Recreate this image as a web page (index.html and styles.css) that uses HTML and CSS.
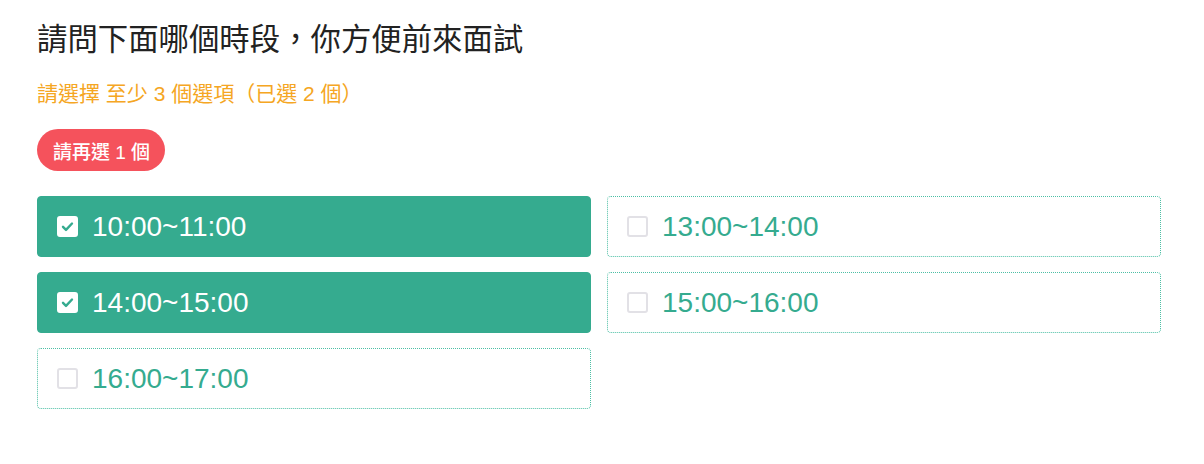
FILE: index.html
```html
<!DOCTYPE html>
<html lang="zh-Hant">
<head>
<meta charset="utf-8">
<title>面試時段</title>
<link rel="stylesheet" href="styles.css">
</head>
<body>
<div class="wrap">
  <h1 class="title">請問下面哪個時段，你方便前來面試</h1>
  <p class="hint">請選擇 至少 3 個選項（已選 2 個）</p>
  <div class="badge-row"><span class="badge">請再選 1 個</span></div>
  <div class="options">
    <label class="opt checked"><span class="box"><svg viewBox="0 0 20 20" width="15" height="15"><path d="M4 10.5l4 4 8-8.5" fill="none" stroke="#35ab8f" stroke-width="3.2" stroke-linecap="round" stroke-linejoin="round"/></svg></span><span class="txt">10:00~11:00</span></label>
    <label class="opt"><span class="box"></span><span class="txt">13:00~14:00</span></label>
    <label class="opt checked"><span class="box"><svg viewBox="0 0 20 20" width="15" height="15"><path d="M4 10.5l4 4 8-8.5" fill="none" stroke="#35ab8f" stroke-width="3.2" stroke-linecap="round" stroke-linejoin="round"/></svg></span><span class="txt">14:00~15:00</span></label>
    <label class="opt"><span class="box"></span><span class="txt">15:00~16:00</span></label>
    <label class="opt"><span class="box"></span><span class="txt">16:00~17:00</span></label>
  </div>
</div>
</body>
</html>
```
FILE: styles.css
```css
html, body {
  margin: 0;
  padding: 0;
  background: #ffffff;
}
body {
  font-family: "Liberation Sans", "Noto Sans CJK TC", sans-serif;
}
.wrap {
  width: 1124px;
  padding: 17px 0 0 37px;
}
.title {
  margin: 0;
  font-family: "Noto Sans CJK TC", sans-serif;
  font-weight: 400;
  font-size: 30.4px;
  line-height: 40px;
  color: #222222;
}
.hint {
  margin: 24px 0 0;
  font-family: "Liberation Sans", "Noto Sans CJK TC", sans-serif;
  font-size: 21px;
  line-height: 26px;
  color: #f5a623;
}
.badge-row {
  margin-top: 22px;
  display: flex;
}
.badge {
  display: inline-flex;
  align-items: center;
  height: 42px;
  padding: 0 15px 0 16px;
  border-radius: 21px;
  background: #f5525c;
  color: #ffffff;
  font-family: "Liberation Sans", "Noto Sans CJK TC", sans-serif;
  font-weight: 500;
  font-size: 19px;
}
.options {
  margin-top: 25px;
  display: grid;
  grid-template-columns: 1fr 1fr;
  column-gap: 16px;
  row-gap: 15px;
}
.opt {
  height: 61px;
  box-sizing: border-box;
  display: flex;
  align-items: center;
  padding-left: 19px;
  border: 1px dotted #4dbfa5;
  border-radius: 4px;
  background: #ffffff;
  color: #35ab8f;
}
.opt.checked {
  background: #35ab8f;
  border: 1px solid #35ab8f;
  color: #ffffff;
}
.box {
  width: 21px;
  height: 21px;
  box-sizing: border-box;
  border: 2px solid #e2e1e6;
  border-radius: 3px;
  background: #ffffff;
  display: flex;
  align-items: center;
  justify-content: center;
  margin-right: 14px;
}
.opt.checked .box {
  border-color: #ffffff;
}
.txt {
  font-size: 28px;
  line-height: 1;
}
```
